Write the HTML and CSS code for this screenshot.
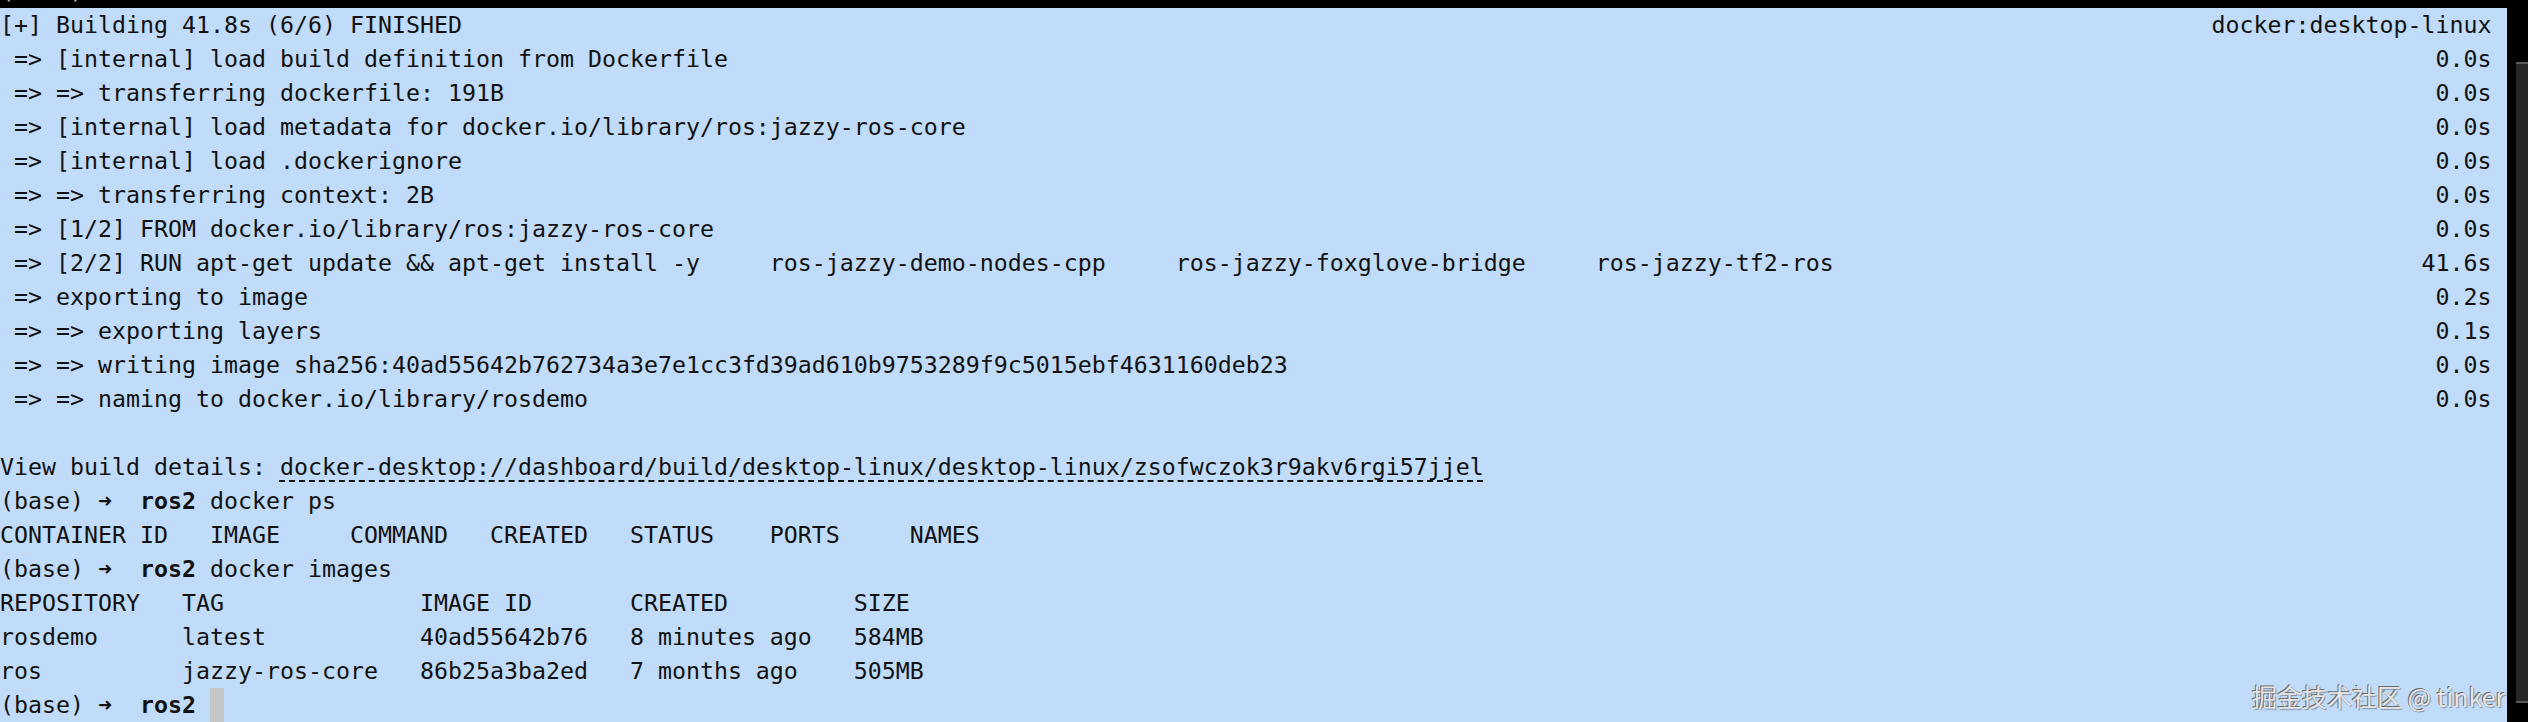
FILE: index.html
```html
<!DOCTYPE html>
<html lang="en">
<head>
  <meta charset="UTF-8" />
  <title>ros2 — docker build</title>
  <link rel="stylesheet" href="styles.css">
</head>
<body>
  <div class="screen">
    <div class="prev"><div class="ln">(base) ➜  <b>ros2</b> docker build -t rosdemo .</div></div>

    <div class="buffer">
      <div class="ln row"><span>[+] Building 41.8s (6/6) FINISHED</span><span>docker:desktop-linux</span></div>
      <div class="ln row"><span> =&gt; [internal] load build definition from Dockerfile</span><span>0.0s</span></div>
      <div class="ln row"><span> =&gt; =&gt; transferring dockerfile: 191B</span><span>0.0s</span></div>
      <div class="ln row"><span> =&gt; [internal] load metadata for docker.io/library/ros:jazzy-ros-core</span><span>0.0s</span></div>
      <div class="ln row"><span> =&gt; [internal] load .dockerignore</span><span>0.0s</span></div>
      <div class="ln row"><span> =&gt; =&gt; transferring context: 2B</span><span>0.0s</span></div>
      <div class="ln row"><span> =&gt; [1/2] FROM docker.io/library/ros:jazzy-ros-core</span><span>0.0s</span></div>
      <div class="ln row"><span> =&gt; [2/2] RUN apt-get update &amp;&amp; apt-get install -y     ros-jazzy-demo-nodes-cpp     ros-jazzy-foxglove-bridge     ros-jazzy-tf2-ros</span><span>41.6s</span></div>
      <div class="ln row"><span> =&gt; exporting to image</span><span>0.2s</span></div>
      <div class="ln row"><span> =&gt; =&gt; exporting layers</span><span>0.1s</span></div>
      <div class="ln row"><span> =&gt; =&gt; writing image sha256:40ad55642b762734a3e7e1cc3fd39ad610b9753289f9c5015ebf4631160deb23</span><span>0.0s</span></div>
      <div class="ln row"><span> =&gt; =&gt; naming to docker.io/library/rosdemo</span><span>0.0s</span></div>
      <div class="ln"> </div>
      <div class="ln">View build details: <span class="link">docker-desktop://dashboard/build/desktop-linux/desktop-linux/zsofwczok3r9akv6rgi57jjel</span></div>
      <div class="ln">(base) <span class="arrow">➜</span>  <b>ros2</b> docker ps</div>
      <div class="ln">CONTAINER ID   IMAGE     COMMAND   CREATED   STATUS    PORTS     NAMES</div>
      <div class="ln">(base) <span class="arrow">➜</span>  <b>ros2</b> docker images</div>
      <div class="ln">REPOSITORY   TAG              IMAGE ID       CREATED         SIZE</div>
      <div class="ln">rosdemo      latest           40ad55642b76   8 minutes ago   584MB</div>
      <div class="ln">ros          jazzy-ros-core   86b25a3ba2ed   7 months ago    505MB</div>
      <div class="ln">(base) <span class="arrow">➜</span>  <b>ros2</b> <span class="cursor"> </span></div>

      <div class="watermark">掘金技术社区 @ tinker</div>
    </div>
  </div>

  <div class="scrollbar">
    <div class="thumb"></div>
  </div>
</body>
</html>
```

FILE: styles.css
```css
body {
  margin: 0;
  background: #000;
  display: flex;
  height: 722px;
  overflow: hidden;
}
.screen {
  width: 2507px;
  display: flex;
  flex-direction: column;
}
.ln {
  font-family: "DejaVu Sans Mono", "Liberation Mono", monospace;
  font-size: 23.25px;
  line-height: 34px;
  height: 34px;
  white-space: pre;
  width: 178ch;
}
.row {
  display: flex;
  justify-content: space-between;
}
.prev {
  height: 8px;
  overflow: hidden;
  display: flex;
  flex-direction: column;
  justify-content: flex-end;
  color: #bdbdbd;
}
.buffer {
  flex: 1;
  background: #c1dcfb;
  color: #111;
  position: relative;
  overflow: hidden;
}
.link {
  text-decoration: underline dashed 2px;
  text-underline-offset: 5px;
}
.arrow {
  font-weight: bold;
}
.cursor {
  display: inline-block;
  width: 1ch;
  height: 34px;
  vertical-align: top;
  background: #c6c6c6;
}
.watermark {
  position: absolute;
  left: 2252px;
  top: 672px;
  font-family: "Noto Sans CJK SC", "Noto Sans", sans-serif;
  font-size: 25px;
  line-height: 32px;
  white-space: nowrap;
  color: #e6e6e6;
  text-shadow: -1px -1px 0 #6a6a6a, 1px 1px 1px rgba(0,0,0,0.35);
}
.scrollbar {
  width: 21px;
  display: flex;
  justify-content: flex-end;
}
.thumb {
  width: 12px;
  margin-top: 62px;
  height: 637px;
  background: #262626;
  border-top: 2px solid #5a5a5a;
  border-bottom: 2px solid #5a5a5a;
}
```
